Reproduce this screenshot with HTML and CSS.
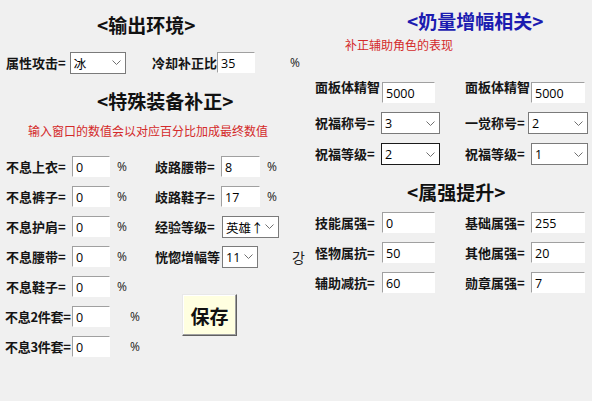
FILE: index.html
```html
<!DOCTYPE html>
<html lang="zh-CN">
<head>
<meta charset="utf-8">
<title>设置</title>
<link rel="stylesheet" href="styles.css">
</head>
<body>
<div class="form">
  <section class="left">
    <h2 class="title t1">&lt;输出环境&gt;</h2>
    <div class="row env">
      <span class="lbl env-lbl">属性攻击=</span>
      <div class="combo w58"><span>冰</span><svg class="chev" width="9" height="5" viewBox="0 0 9 5"><polyline points="0.5,0.5 4.5,4.5 8.5,0.5" fill="none" stroke="#707070" stroke-width="1"/></svg></div>
      <span class="lbl cool-lbl">冷却补正比</span>
      <input class="box w38" value="35">
      <span class="pct pct-far">%</span>
    </div>
    <h2 class="title t2">&lt;特殊装备补正&gt;</h2>
    <p class="note note1">输入窗口的数值会以对应百分比加成最终数值</p>
    <div class="equip">
      <div class="col col-a">
        <div class="row"><span class="lbl la">不息上衣=</span><input class="box w38" value="0"><span class="pct">%</span></div>
        <div class="row"><span class="lbl la">不息裤子=</span><input class="box w38" value="0"><span class="pct">%</span></div>
        <div class="row"><span class="lbl la">不息护肩=</span><input class="box w38" value="0"><span class="pct">%</span></div>
        <div class="row"><span class="lbl la">不息腰带=</span><input class="box w38" value="0"><span class="pct">%</span></div>
        <div class="row"><span class="lbl la">不息鞋子=</span><input class="box w38" value="0"><span class="pct">%</span></div>
        <div class="row"><span class="lbl la la-tight">不息2件套=</span><input class="box w38" value="0"><span class="pct pct-wide">%</span></div>
        <div class="row"><span class="lbl la la-tight">不息3件套=</span><input class="box w38" value="0"><span class="pct pct-wide">%</span></div>
      </div>
      <div class="col col-b">
        <div class="row"><span class="lbl lb">歧路腰带=</span><input class="box w39" value="8"><span class="pct">%</span></div>
        <div class="row"><span class="lbl lb">歧路鞋子=</span><input class="box w39" value="17"><span class="pct">%</span></div>
        <div class="row"><span class="lbl lb">经验等级=</span><div class="combo w57 ml1"><span>英雄↑</span><svg class="chev" width="9" height="5" viewBox="0 0 9 5"><polyline points="0.5,0.5 4.5,4.5 8.5,0.5" fill="none" stroke="#707070" stroke-width="1"/></svg></div></div>
        <div class="row"><span class="lbl lb">恍惚增幅等</span><div class="combo w36 ml1"><span>11</span><svg class="chev" width="9" height="5" viewBox="0 0 9 5"><polyline points="0.5,0.5 4.5,4.5 8.5,0.5" fill="none" stroke="#707070" stroke-width="1"/></svg></div><span class="kr">강</span></div>
        <button class="save" type="button">保存</button>
      </div>
    </div>
  </section>
  <section class="right">
    <h2 class="title t3">&lt;奶量增幅相关&gt;</h2>
    <p class="note note2">补正辅助角色的表现</p>
    <div class="grid buff">
      <span class="lbl top">面板体精智</span>
      <input class="box w53 bottom" value="5000">
      <span class="lbl top">面板体精智</span>
      <input class="box w54 bottom" value="5000">

      <span class="lbl">祝福称号=</span>
      <div class="combo w59 mlm1"><span>3</span><svg class="chev" width="9" height="5" viewBox="0 0 9 5"><polyline points="0.5,0.5 4.5,4.5 8.5,0.5" fill="none" stroke="#707070" stroke-width="1"/></svg></div>
      <span class="lbl">一觉称号=</span>
      <div class="combo w60 mlm3"><span>2</span><svg class="chev" width="9" height="5" viewBox="0 0 9 5"><polyline points="0.5,0.5 4.5,4.5 8.5,0.5" fill="none" stroke="#707070" stroke-width="1"/></svg></div>

      <span class="lbl">祝福等级=</span>
      <div class="combo w59 mlm1 focus"><span>2</span><svg class="chev" width="9" height="5" viewBox="0 0 9 5"><polyline points="0.5,0.5 4.5,4.5 8.5,0.5" fill="none" stroke="#707070" stroke-width="1"/></svg></div>
      <span class="lbl">祝福等级=</span>
      <div class="combo w57"><span>1</span><svg class="chev" width="9" height="5" viewBox="0 0 9 5"><polyline points="0.5,0.5 4.5,4.5 8.5,0.5" fill="none" stroke="#707070" stroke-width="1"/></svg></div>
    </div>
    <h2 class="title t4">&lt;属强提升&gt;</h2>
    <div class="grid elem">
      <span class="lbl">技能属强=</span>
      <input class="box w53" value="0">
      <span class="lbl">基础属强=</span>
      <input class="box w54" value="255">

      <span class="lbl">怪物属抗=</span>
      <input class="box w53" value="50">
      <span class="lbl">其他属强=</span>
      <input class="box w54" value="20">

      <span class="lbl">辅助减抗=</span>
      <input class="box w53" value="60">
      <span class="lbl">勋章属强=</span>
      <input class="box w54" value="7">
    </div>
  </section>
</div>
</body>
</html>
```

FILE: styles.css
```css
* { box-sizing: border-box; }

html, body {
  margin: 0;
  padding: 0;
}

body {
  width: 592px;
  height: 401px;
  overflow: hidden;
  background: #f0f0f0;
  color: #000;
  font-family: "Noto Sans CJK SC", "Noto Sans", sans-serif;
  font-size: 13px;
}

.form {
  display: flex;
  align-items: flex-start;
}

.left {
  width: 300px;
  flex: none;
}

.right {
  flex: 1;
}

.title {
  margin: 0;
  font-size: 19px;
  font-weight: 700;
  line-height: 24px;
  height: 24px;
  white-space: nowrap;
  color: #111;
}

.t1 { margin-top: 13px; padding-left: 97px; }
.t2 { margin-top: 16px; padding-left: 97px; }
.t3 { margin-top: 9px; padding-left: 107px; color: #1c1cb0; }
.t4 { margin-top: 15px; padding-left: 107px; }

.note {
  margin: 0;
  font-size: 12px;
  line-height: 16px;
  height: 16px;
  color: #d42a2a;
  white-space: nowrap;
}

.note1 { margin-top: 10px; padding-left: 28px; }
.note2 { margin-top: 4px; padding-left: 45px; }

.row {
  display: flex;
  align-items: center;
  height: 21px;
}

.lbl {
  font-weight: 700;
  font-size: 13px;
  line-height: 16px;
  white-space: nowrap;
  color: #151515;
}

.env { margin-top: 15px; }
.env-lbl { margin-left: 6px; width: 66px; }
.cool-lbl { margin-left: 26px; width: 66px; }

.box {
  display: block;
  height: 21px;
  margin: 0;
  padding: 1px 0 0 3px;
  border: 1px solid #fff;
  border-top-color: #a0a0a0;
  border-left-color: #a0a0a0;
  background: #fff;
  font-family: "Open Sans", "Noto Sans", sans-serif;
  font-size: 12.5px;
  color: #000;
  outline: none;
}

.w38 { width: 38px; }
.w39 { width: 39px; }
.w53 { width: 53px; }
.w54 { width: 54px; }

.combo {
  display: flex;
  align-items: center;
  justify-content: space-between;
  height: 22px;
  padding: 0 4px 0 3px;
  border: 1px solid #7a7a7a;
  background: #fff;
  font-family: "Open Sans", "Noto Sans", "Noto Sans CJK SC", sans-serif;
  font-size: 12.5px;
  white-space: nowrap;
  overflow: hidden;
}

.combo span { padding-top: 1px; }
.combo .chev { flex: none; }
.combo.focus { border-color: #1a1a1a; }

.w36 { width: 36px; }
.w57 { width: 57px; }
.w58 { width: 58px; }
.w59 { width: 59px; }
.w60 { width: 60px; }
.ml1 { margin-left: 1px; }
.mlm1 { margin-left: -1px; }
.mlm3 { margin-left: -3px; }

.pct {
  font-family: "Open Sans", "Noto Sans", sans-serif;
  font-size: 12px;
  color: #222;
  margin-left: 7px;
}
.pct-wide { margin-left: 20px; }
.pct-far { margin-left: 35px; }

.equip {
  display: flex;
  margin-top: 17px;
}

.col {
  display: flex;
  flex-direction: column;
  gap: 9px;
}

.col-a { width: 155px; flex: none; }
.la { margin-left: 6px; width: 66px; }
.la-tight { margin-left: 5px; width: 67px; letter-spacing: -0.3px; }

.col-b { flex: 1; }
.lb { width: 66px; }

.kr {
  margin-left: 34px;
  font-size: 14px;
  color: #222;
}

.save {
  margin: 18px 0 0 27px;
  width: 55px;
  height: 42px;
  padding: 0;
  background: #ffffe0;
  border: 1px solid;
  border-color: #e8e8e8 #606060 #606060 #e8e8e8;
  box-shadow: inset -1px -1px 0 #a0a0a0, inset 1px 1px 0 #fff;
  font-family: "Noto Sans CJK SC", sans-serif;
  font-size: 19px;
  font-weight: 700;
  color: #111;
}

.grid {
  display: grid;
  grid-template-columns: 67px 83px 66px 1fr;
  align-items: center;
  padding-left: 15px;
  row-gap: 9px;
}

.buff {
  margin-top: 27px;
  grid-template-rows: 23px 22px 22px;
}

.elem {
  margin-top: 8px;
  grid-template-rows: 21px 21px 21px;
}

.top { align-self: start; margin-top: -1px; }
.bottom { align-self: end; }
```
